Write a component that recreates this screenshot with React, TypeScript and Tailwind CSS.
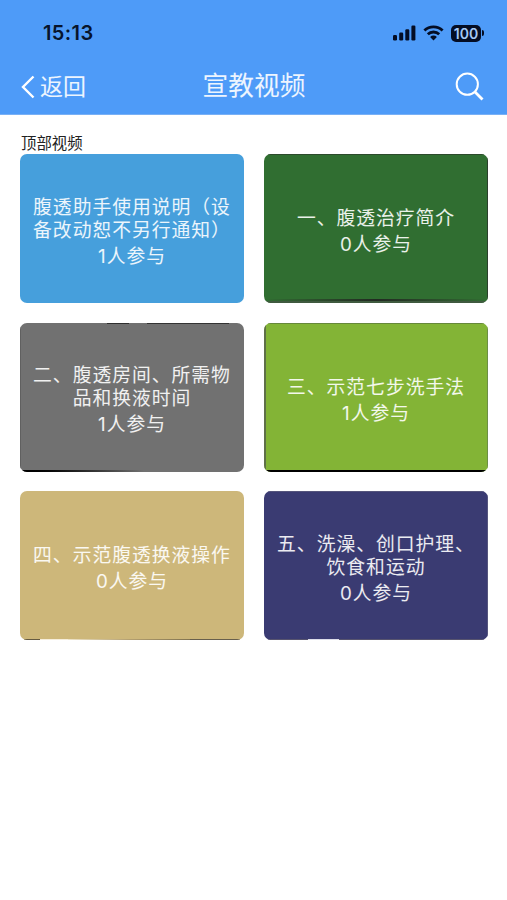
import React from "react";

type Video = {
  title: string;
  count: number;
  color: string;
  // thin slivers of the cover image showing at the card's edges
  edges?: string[];
};

const videos: Video[] = [
  {
    title: "腹透助手使用说明（设备改动恕不另行通知）",
    count: 1,
    color: "bg-[#469fdc]",
  },
  {
    title: "一、腹透治疗简介",
    count: 0,
    color: "bg-[#306e31]",
    edges: [
      "top-0 inset-x-0 h-px bg-[#2c4a2c]",
      "right-0 inset-y-0 w-px bg-[#2b3f2c]",
      "bottom-0.5 inset-x-0 h-0.5 bg-linear-to-r from-[#306e31] via-[#222a22] to-[#306e31]",
      "bottom-0 inset-x-0 h-0.5 bg-[#3f5a3f]",
    ],
  },
  {
    title: "二、腹透房间、所需物品和换液时间",
    count: 1,
    color: "bg-[#717171]",
    edges: [
      "left-0 inset-y-0 w-px bg-[#606060]",
      "top-0 left-[87px] w-[22px] h-px bg-[#2f2f2f]",
      "top-0 left-[127px] w-[82px] h-px bg-[#333333]",
      "bottom-0 left-0 w-[124px] h-0.5 bg-linear-to-r from-black to-[#717171]",
    ],
  },
  {
    title: "三、示范七步洗手法",
    count: 1,
    color: "bg-[#83b436]",
    edges: [
      "top-0 inset-x-0 h-px bg-[#66883a]",
      "left-0 inset-y-0 w-0.5 bg-[#5f7048]",
      "right-0 inset-y-0 w-px bg-[#6d8f45]",
      "bottom-0 inset-x-0 h-0.5 bg-black",
    ],
  },
  {
    title: "四、示范腹透换液操作",
    count: 0,
    color: "bg-[#cdb77a]",
    edges: [
      "bottom-0 left-1 w-4 h-px bg-[#655b42]",
      "bottom-0 left-5 w-7 h-px bg-[#f6eedb]",
      "bottom-0 left-[48px] w-[122px] h-px bg-linear-to-r from-[#efe5c9] via-[#b4a071] to-[#827451]",
      "bottom-0 left-[170px] w-[50px] h-px bg-[#685f4c]",
    ],
  },
  {
    title: "五、洗澡、创口护理、饮食和运动",
    count: 0,
    color: "bg-[#3a3b72]",
    edges: [
      "top-0 inset-x-0 h-px bg-[#55557c]",
      "right-0 inset-y-0 w-px bg-[#56567e]",
      "bottom-0 inset-x-0 h-px bg-[#57546f]",
      "bottom-0 left-11 w-[31px] h-px bg-[#dddde9]",
    ],
  },
];

const StatusBar: React.FC = () => (
  <div className="flex h-[58px] items-center justify-between pt-[8px] pl-[43px] pr-[23px]">
    <span className="font-['Inter','Liberation_Sans',sans-serif] text-[20px] leading-6 font-semibold tracking-[0.4px] text-[#07142c]">
      15:13
    </span>
    <div className="flex items-center gap-[7px] text-[#040d24]">
      <svg width="23" height="16" viewBox="0 0 23 16" fill="currentColor">
        <rect x="0" y="10" width="4" height="5.5" rx="1.2" />
        <rect x="6.2" y="7.5" width="4" height="8" rx="1.2" />
        <rect x="12.3" y="4.2" width="4" height="11.3" rx="1.2" />
        <rect x="18.4" y="0.6" width="4" height="14.9" rx="1.2" />
      </svg>
      <svg width="21" height="16" viewBox="0 0 21 16" fill="none">
        <path
          d="M1.4 5.6a13 13 0 0 1 18.2 0M4.8 9.3a8.2 8.2 0 0 1 11.4 0"
          stroke="currentColor"
          strokeWidth="2.8"
        />
        <path d="M7.1 11.9a4.9 4.9 0 0 1 6.8 0L10.5 15.4Z" fill="currentColor" />
      </svg>
      <div className="flex items-center gap-px">
        <div className="flex h-[17px] w-[30px] items-center justify-center rounded-[5px] bg-[#040d24] pt-px font-['Inter','Liberation_Sans',sans-serif] text-[14px] leading-none font-semibold text-[#a3c8f6]">
          100
        </div>
        <span className="h-[6px] w-[2px] rounded-r-full bg-[#040d24]" />
      </div>
    </div>
  </div>
);

const VideoCard: React.FC<{ video: Video }> = ({ video }) => (
  <div
    className={`relative flex h-[149px] flex-col items-center justify-center overflow-hidden rounded-[7px] px-2 text-center text-[18.8px] tracking-[1px] text-white/90 ${video.color}`}
  >
    {video.edges?.map((edge) => (
      <span key={edge} className={`absolute ${edge}`} />
    ))}
    <p className="leading-[23px]">{video.title}</p>
    <p className="mt-[7px] -mb-px leading-4 whitespace-nowrap">
      <span className="font-['Inter',sans-serif]">{video.count}</span>
      人参与
    </p>
  </div>
);

const App: React.FC = () => {
  return (
    <div className="h-[900px] w-[507px] overflow-hidden bg-white font-['Noto_Sans_CJK_SC',sans-serif]">
      {/* Header */}
      <header className="h-[115px] border-b border-[#79b0f5] bg-[#4e9bf8]">
        <StatusBar />
        <div className="grid h-[57px] grid-cols-3 items-center pr-[23px] pl-[21px] text-white/90">
          <button className="flex items-center gap-[5px] text-[23px] leading-none">
            <svg width="14" height="24" viewBox="0 0 14 24" fill="none">
              <path d="M12.5 1.5 2 12l10.5 10.5" stroke="white" strokeWidth="2.4" />
            </svg>
            <span className="pb-0.5">返回</span>
          </button>
          <h1 className="pb-[5px] pl-[3px] text-center text-[25.7px] leading-none font-normal whitespace-nowrap">
            宣教视频
          </h1>
          <button className="justify-self-end">
            <svg width="29" height="29" viewBox="0 0 29 29" fill="none" stroke="white">
              <circle cx="12.3" cy="12.2" r="10.6" strokeWidth="2" />
              <path d="M19.8 19.8 27.5 27.5" strokeWidth="2.8" />
            </svg>
          </button>
        </div>
      </header>

      {/* Video list */}
      <main className="px-5 pt-[16px]">
        <h2 className="mb-px h-[22px] pl-px text-[15.4px] leading-[22px] text-[#222222]">
          顶部视频
        </h2>
        <div className="grid grid-cols-[224px_224px] gap-x-5 gap-y-[19.5px]">
          {videos.map((video) => (
            <VideoCard key={video.title} video={video} />
          ))}
        </div>
      </main>
    </div>
  );
};

export default App;
